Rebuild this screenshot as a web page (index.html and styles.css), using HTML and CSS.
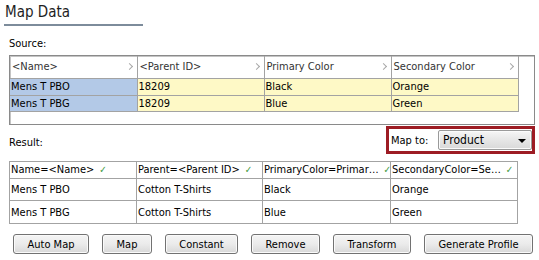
FILE: index.html
```html
<!DOCTYPE html>
<html lang="en">
<head>
    <meta charset="UTF-8">
    <title>Map Data</title>
    <link rel="stylesheet" href="styles.css">
</head>
<body>
    <div class="page">
        <h1 class="title">Map Data</h1>

        <div class="section-label">Source:</div>
        <div class="source-box">
            <table class="grid source-grid">
                <tr class="head">
                    <th><span>&lt;Name&gt;</span><i class="chev"></i></th>
                    <th><span>&lt;Parent ID&gt;</span><i class="chev"></i></th>
                    <th><span>Primary Color</span><i class="chev"></i></th>
                    <th><span>Secondary Color</span><i class="chev"></i></th>
                </tr>
                <tr class="row-a">
                    <td class="key">Mens T PBO</td>
                    <td>18209</td>
                    <td>Black</td>
                    <td>Orange</td>
                </tr>
                <tr class="row-b">
                    <td class="key">Mens T PBG</td>
                    <td>18209</td>
                    <td>Blue</td>
                    <td>Green</td>
                </tr>
            </table>
        </div>

        <div class="result-bar">
            <div class="section-label">Result:</div>
            <div class="map-to">
                <span>Map to:</span>
                <div class="select">
                    <span>Product</span>
                    <i class="caret"></i>
                </div>
            </div>
        </div>

        <table class="grid result-grid">
            <colgroup>
                <col class="c1">
                <col class="c2">
                <col class="c3">
                <col class="c4">
            </colgroup>
            <tr class="head">
                <th>Name=&lt;Name&gt;<b class="ok">&#10003;</b></th>
                <th>Parent=&lt;Parent ID&gt;<b class="ok">&#10003;</b></th>
                <th>PrimaryColor=Primar&hellip;<b class="ok">&#10003;</b></th>
                <th>SecondaryColor=Se&hellip;<b class="ok">&#10003;</b></th>
            </tr>
            <tr>
                <td>Mens T PBO</td>
                <td>Cotton T-Shirts</td>
                <td>Black</td>
                <td>Orange</td>
            </tr>
            <tr class="last">
                <td>Mens T PBG</td>
                <td>Cotton T-Shirts</td>
                <td>Blue</td>
                <td>Green</td>
            </tr>
        </table>

        <div class="buttons">
            <button class="w-auto">Auto Map</button>
            <button class="w-map">Map</button>
            <button class="w-const">Constant</button>
            <button class="w-remove">Remove</button>
            <button class="w-transform">Transform</button>
            <button class="w-profile">Generate Profile</button>
        </div>
    </div>
</body>
</html>
```

FILE: styles.css
```css
body {
    margin: 0;
    font-family: "DejaVu Sans Condensed", "Liberation Sans", Arial, sans-serif;
    font-size: 11px;
    color: #000;
    background: #fff;
}
.page {
    width: 539px;
    height: 260px;
}
.title {
    margin: 0 0 0 4px;
    width: 138px;
    padding: 3px 0 3px 1px;
    font-size: 15px;
    font-weight: normal;
    line-height: 18px;
    color: #1e1e1e;
    border-bottom: 2px solid #7d8c9b;
}
.section-label {
    margin: 11px 0 0 9px;
    line-height: 14px;
}
.source-box {
    margin: 4px 0 0 9px;
    width: 526px;
    height: 70px;
    box-sizing: border-box;
    border: 1px solid #8a8a8a;
    box-shadow: inset 1px 1px 0 #c4c4c4;
    background: #fff;
}
.grid {
    border-collapse: collapse;
    table-layout: fixed;
}
.grid th, .grid td {
    padding: 0 0 0 1px;
    text-align: left;
    font-weight: normal;
    white-space: nowrap;
    overflow: hidden;
    border-right: 1px solid #a3a3a3;
    border-bottom: 1px solid #a3a3a3;
}
.source-grid {
    width: 508px;
}
.source-grid th, .source-grid td {
    width: 127px;
    box-sizing: border-box;
}
.source-grid .head th {
    height: 22px;
    padding: 0 5px 0 2px;
    color: #333;
}
.source-grid .head th span {
    float: left;
    line-height: 21px;
}
.chev {
    float: right;
    width: 4px;
    height: 4px;
    margin-top: 8px;
    border-right: 1.5px solid #a8a8a8;
    border-top: 1.5px solid #a8a8a8;
    transform: rotate(45deg);
}
.source-grid td {
    background: #fef9c6;
    line-height: 15px;
}
.source-grid .row-a td {
    height: 17px;
}
.source-grid .row-b td {
    height: 16px;
}
.source-grid td.key {
    background: #b3c9e7;
}
.result-bar {
    display: flex;
    justify-content: space-between;
    align-items: flex-start;
    height: 28px;
    margin-top: 1px;
}
.result-bar .section-label {
    margin-top: 10px;
}
.map-to {
    display: flex;
    align-items: center;
    margin-right: 4px;
    width: 149px;
    height: 28px;
    box-sizing: border-box;
    border: 3px solid #9d1c24;
    padding: 0 0 0 2px;
}
.select {
    display: flex;
    align-items: center;
    justify-content: space-between;
    margin-left: auto;
    width: 94px;
    height: 20px;
    box-sizing: border-box;
    padding: 0 5px 0 4px;
    border: 1px solid #9a9a9a;
    border-radius: 2px;
    background: linear-gradient(#f6f6f6, #e6e6e6 50%, #d9d9d9);
    box-shadow: inset 0 0 0 1px #fbfbfb;
    font-size: 12px;
}
.caret {
    width: 0;
    height: 0;
    border-left: 4px solid transparent;
    border-right: 4px solid transparent;
    border-top: 4px solid #000;
    margin-top: 2px;
}
.result-grid {
    width: 509px;
    margin: 7px 0 0 9px;
    border-top: 1px solid #a3a3a3;
    border-left: 1px solid #a3a3a3;
}
.result-grid .c1 { width: 127px; }
.result-grid .c2 { width: 126px; }
.result-grid .c3 { width: 128px; }
.result-grid .c4 { width: 127px; }
.result-grid .head th {
    height: 16px;
    line-height: 14px;
}
.result-grid td {
    height: 21px;
}
.result-grid .last td {
    height: 22px;
}
.ok {
    margin-left: 5px;
    font-size: 10px;
    font-weight: normal;
    color: #3d9a3d;
}
.buttons {
    display: flex;
    gap: 13px;
    margin: 10px 0 0 13px;
}
button {
    height: 20px;
    padding: 0;
    font-family: inherit;
    font-size: 11px;
    color: #000;
    border: 1px solid #727272;
    border-radius: 3px;
    background: linear-gradient(#f4f4f4, #ebebeb 50%, #d8d8d8);
    box-shadow: inset 0 0 0 1px #fafafa;
}
.w-auto { width: 76px; }
.w-map { width: 50px; }
.w-const { width: 73px; }
.w-remove { width: 69px; }
.w-transform { width: 78px; }
.w-profile { width: 109px; }
```
